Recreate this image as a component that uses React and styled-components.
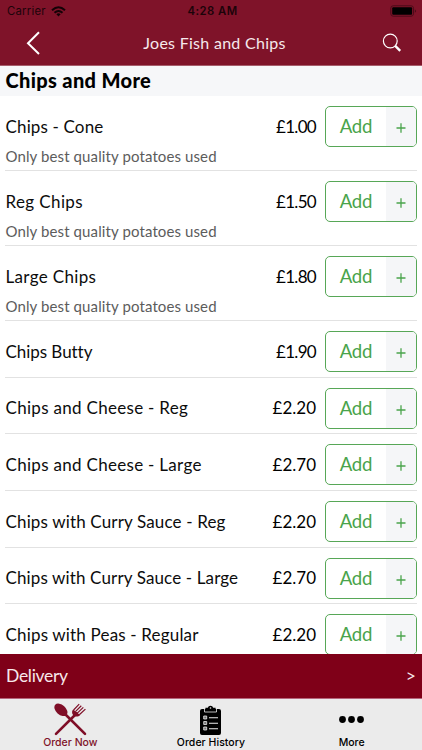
import React from "react";
import styled, { createGlobalStyle } from "styled-components";

const GlobalStyle = createGlobalStyle`
  * { box-sizing: border-box; }
  body { margin: 0; background: #fff; font-family: Lato, "Open Sans", sans-serif; color: #0c0c0c; }
`;

const Screen = styled.div`
  width: 422px;
  height: 750px;
  display: flex;
  flex-direction: column;
  overflow: hidden;
  background: #fff;
`;

const StatusBar = styled.div`
  flex: none;
  height: 22px;
  padding: 0 5px 0 7px;
  display: grid;
  grid-template-columns: 1fr auto 1fr;
  align-items: center;
  background: #7f1329;
  color: #1c0309;
  font: 11.3px/22px Inter, sans-serif;
`;

const Carrier = styled.div`
  display: flex;
  align-items: center;
  gap: 5px;
  letter-spacing: 0.25px;
`;

const Clock = styled.div`
  font-weight: 600;
  letter-spacing: 0.45px;
  padding-left: 1px;
`;

const BatterySlot = styled.div`
  display: flex;
  justify-content: flex-end;
`;

const NavBar = styled.header`
  flex: none;
  height: 44px;
  padding: 0 20px 2px 26px;
  display: grid;
  grid-template-columns: 20px 1fr 20px;
  align-items: center;
  background: #7f1329;
  border-bottom: 1px solid #a65d6b;
  color: #f6e9ec;
`;

const NavTitle = styled.h1`
  margin: 0;
  padding-left: 1px;
  text-align: center;
  font-size: 16px;
  font-weight: 400;
  letter-spacing: 0.28px;
`;

const SectionTitle = styled.h2`
  flex: none;
  margin: 0;
  height: 30px;
  padding-left: 5.5px;
  background: #f6f7f9;
  color: #000;
  font-size: 20px;
  line-height: 28px;
  font-weight: 900;
  letter-spacing: 0.35px;
`;

const Menu = styled.ul`
  flex: 1;
  min-height: 0;
  overflow: hidden;
  margin: 0;
  padding: 0 5px;
  list-style: none;
`;

const Item = styled.li`
  height: ${(p) => (p.$tall ? 75 : 56.7)}px;
  padding-top: 10px;
  border-bottom: 1px solid #e2e2e2;
`;

const ItemLine = styled.div`
  display: flex;
  align-items: center;
  height: 41px;
`;

const ItemName = styled.span`
  flex: 1;
  padding: 0 0 1px 0.5px;
  font-size: 17px;
  letter-spacing: ${(p) => p.$spacing}px;
`;

const Price = styled.span`
  padding-bottom: 1px;
  color: #000;
  font-size: 17px;
  letter-spacing: ${(p) => p.$spacing}px;
  margin-right: 9px;
`;

const Note = styled.div`
  margin-top: -1px;
  padding-left: 0.5px;
  font-size: 15px;
  line-height: 20px;
  letter-spacing: 0.11px;
  color: #5c5c5c;
`;

const AddButton = styled.button`
  width: 92px;
  height: 41px;
  margin: 0;
  padding: 0;
  display: flex;
  border: 1px solid #57a757;
  border-radius: 5px;
  overflow: hidden;
  background: #fff;
  color: #49a44b;
  font-family: inherit;
`;

const AddLabel = styled.span`
  width: 60px;
  font-size: 18.6px;
  line-height: 39px;
  letter-spacing: -0.2px;
  text-align: center;
`;

const Plus = styled.span`
  flex: 1;
  display: flex;
  align-items: center;
  justify-content: center;
  padding-top: 3px;
  background: #f5f6f8;
`;

const DeliveryBar = styled.div`
  flex: none;
  height: 44px;
  padding: 0 6px;
  display: flex;
  align-items: center;
  justify-content: space-between;
  background: #7f0018;
  color: #f7e8eb;
  font-size: 17.5px;
  line-height: 46px;
`;

const DeliveryText = styled.span`
  letter-spacing: -0.3px;
`;

const TabBar = styled.nav`
  flex: none;
  height: 52px;
  display: grid;
  grid-template-columns: repeat(3, 1fr);
  background: #ebebeb;
  border-top: 1px solid #b5657b;
`;

const Tab = styled.div`
  display: flex;
  flex-direction: column;
  align-items: center;
  color: ${(p) => (p.$active ? "#7f1329" : "#000")};
  font: 500 10.5px/14px Inter, sans-serif;
  letter-spacing: ${(p) => p.$spacing}px;
`;

const TabIcon = styled.div`
  height: 37px;
  display: flex;
  align-items: center;
  padding-top: 4px;
`;

const WifiIcon = () => (
  <svg width="15" height="11" viewBox="0 0 15 11" fill="none" stroke="#140206" strokeWidth="2">
    <path d="M1 4.3Q7.5-1.7 14 4.3M3.5 6.8Q7.5 3.1 11.5 6.8" />
    <path d="M5.4 8.2Q7.5 6.5 9.6 8.2L7.5 10.6Z" fill="#140206" stroke="none" />
  </svg>
);

const BatteryIcon = () => (
  <svg width="27" height="12" viewBox="0 0 27 12">
    <rect x=".8" y=".8" width="22.7" height="10.4" rx="2.4" fill="none" stroke="#4b0b19" />
    <rect x="2.2" y="2.2" width="19.9" height="7.6" rx="1" fill="#000" />
    <path d="M24.8 4.2Q27.3 6 24.8 7.8Z" fill="#4b0b19" />
  </svg>
);

const BackIcon = () => (
  <svg width="14" height="24" viewBox="0 0 14 24" fill="none" stroke="#fff" strokeWidth="2">
    <path d="M13 1.3 2 12.2 13 23" />
  </svg>
);

const SearchIcon = () => (
  <svg width="20" height="20" viewBox="0 0 20 20" fill="none" stroke="#fff">
    <circle cx="8.3" cy="8" r="6.9" strokeWidth="1.2" />
    <path d="m13.2 12.8 5 5" strokeWidth="2.4" />
  </svg>
);

const PlusIcon = () => (
  <svg width="10" height="10" viewBox="0 0 10 10" stroke="#49a44b" strokeWidth="1.3">
    <path d="M5 .3v9.4M.5 5h9" />
  </svg>
);

const CutleryIcon = () => (
  <svg width="33" height="33" viewBox="0 0 33 33" fill="none" stroke="#7f0e27">
    <path d="M10.5 10.5 31 30.8" strokeWidth="2.6" strokeLinecap="round" />
    <ellipse cx="6.9" cy="6.8" rx="7.6" ry="4.9" transform="rotate(42 6.9 6.8)" fill="#7f0e27" stroke="none" />
    <path d="M2 30.8 22.5 10.5" strokeWidth="2.6" strokeLinecap="round" />
    <path d="M19.2 6.6 26.1 12C24.2 14.2 20.8 13.7 19.2 12.2 17.7 10.7 17.6 8.2 19.2 6.6Z" fill="#7f0e27" stroke="none" />
    <path d="M19.6 7 25.2 1.2M21.4 8.6l5.9-5.8M23.3 10.1l6-5.7M25.3 11.8l6.1-5.7" strokeWidth="1.2" />
  </svg>
);

const ClipboardIcon = () => (
  <svg width="21" height="30" viewBox="0 0 21 30">
    <path d="M2 4h3.4V2.8h2.4a2.8 2.8 0 0 1 5.4 0h2.4V4H19a2 2 0 0 1 2 2v22a2 2 0 0 1-2 2H2a2 2 0 0 1-2-2V6a2 2 0 0 1 2-2Z" />
    <path d="M4.5 4v3h12V4" fill="none" stroke="#ebebeb" strokeWidth=".8" />
    <circle cx="10.5" cy="3" r=".8" fill="#ebebeb" />
    <path d="M9 12.8h9M9 18.3h9M9 23.8h9" stroke="#ebebeb" strokeWidth="1.1" />
    <path d="M3.7 11h3v3h-3zM3.7 16.5h3v3h-3zM3.7 22h3v3h-3z" fill="#777" stroke="#ebebeb" strokeWidth=".8" />
  </svg>
);

const MoreIcon = () => (
  <svg width="25" height="8" viewBox="0 0 25 8">
    <circle cx="3.5" cy="3.5" r="3.4" />
    <circle cx="12.5" cy="3.5" r="3.4" />
    <circle cx="21.5" cy="3.5" r="3.4" />
  </svg>
);

const NOTE = "Only best quality potatoes used";

const ITEMS = [
  { name: "Chips - Cone", price: "£1.00", note: NOTE, spacing: 0.15 },
  { name: "Reg Chips", price: "£1.50", note: NOTE, spacing: 0.38 },
  { name: "Large Chips", price: "£1.80", note: NOTE, spacing: 0.34 },
  { name: "Chips Butty", price: "£1.90", spacing: -0.05 },
  { name: "Chips and Cheese - Reg", price: "£2.20", spacing: 0.3 },
  { name: "Chips and Cheese - Large", price: "£2.70", spacing: 0.3 },
  { name: "Chips with Curry Sauce - Reg", price: "£2.20", spacing: 0.15 },
  { name: "Chips with Curry Sauce - Large", price: "£2.70", spacing: 0.13 },
  { name: "Chips with Peas - Regular", price: "£2.20", spacing: 0.17 },
];

export default function App() {
  return (
    <Screen>
      <GlobalStyle />
      <StatusBar>
        <Carrier>Carrier <WifiIcon /></Carrier>
        <Clock>4:28 AM</Clock>
        <BatterySlot><BatteryIcon /></BatterySlot>
      </StatusBar>
      <NavBar>
        <BackIcon />
        <NavTitle>Joes Fish and Chips</NavTitle>
        <SearchIcon />
      </NavBar>
      <SectionTitle>Chips and More</SectionTitle>
      <Menu>
        {ITEMS.map((item) => (
          <Item key={item.name} $tall={!!item.note}>
            <ItemLine>
              <ItemName $spacing={item.spacing}>{item.name}</ItemName>
              <Price $spacing={item.price.startsWith("£1") ? -0.7 : 0}>{item.price}</Price>
              <AddButton>
                <AddLabel>Add</AddLabel>
                <Plus><PlusIcon /></Plus>
              </AddButton>
            </ItemLine>
            {item.note && <Note>{item.note}</Note>}
          </Item>
        ))}
      </Menu>
      <DeliveryBar>
        <DeliveryText>Delivery</DeliveryText>
        <span>&gt;</span>
      </DeliveryBar>
      <TabBar>
        <Tab $active $spacing={0}><TabIcon><CutleryIcon /></TabIcon>Order Now</Tab>
        <Tab $spacing={0.05}><TabIcon><ClipboardIcon /></TabIcon>Order History</Tab>
        <Tab $spacing={0}><TabIcon><MoreIcon /></TabIcon>More</Tab>
      </TabBar>
    </Screen>
  );
}
